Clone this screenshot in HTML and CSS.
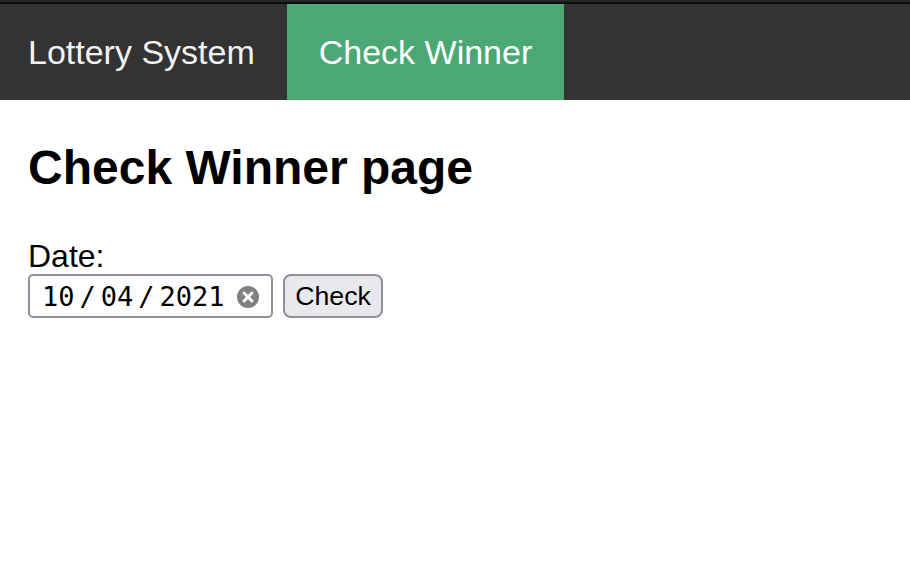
FILE: index.html
```html
<!DOCTYPE html>
<html lang="en">
<head>
<meta charset="utf-8">
<title>Check Winner</title>
<link rel="stylesheet" href="styles.css">
</head>
<body>
<div class="top-edge"></div>
<nav class="topnav">
  <a class="nav-item" href="#">Lottery System</a>
  <a class="nav-item active" href="#">Check Winner</a>
</nav>
<main class="content">
  <h2 class="title">Check Winner page</h2>
  <form class="check-form">
    <label class="date-label" for="date">Date:</label>
    <div class="form-row">
      <div class="date-field" id="date">
        <span class="seg">10</span>
        <span class="sep">/</span>
        <span class="seg">04</span>
        <span class="sep">/</span>
        <span class="seg">2021</span>
        <svg class="clear-icon" viewBox="0 0 22 22" width="22" height="22" aria-hidden="true">
          <circle cx="11" cy="11" r="11" fill="#808080"/>
          <path d="M7 7 L15 15 M15 7 L7 15" stroke="#fff" stroke-width="3" stroke-linecap="round"/>
        </svg>
      </div>
      <button class="check-btn" type="button">Check</button>
    </div>
  </form>
</main>
</body>
</html>
```
FILE: styles.css
```css
html, body {
  margin: 0;
  padding: 0;
  background: #ffffff;
}

body {
  font-family: "Liberation Sans", Arial, sans-serif;
  color: #000;
}

.top-edge {
  height: 2px;
  background: #0b0b0b;
  border-top: 2px solid #27262c;
}

.topnav {
  display: flex;
  background: #333333;
  height: 96px;
}

.nav-item {
  display: block;
  color: #f2f2f2;
  text-decoration: none;
  font-size: 34px;
  line-height: 96px;
  padding: 0 32px;
}

.nav-item:first-child {
  margin-left: -4px;
}

.nav-item.active {
  background: #4ba773;
  color: #ffffff;
}

.content {
  padding-left: 28px;
}

.title {
  font-size: 48px;
  font-weight: bold;
  line-height: 55px;
  margin: 40px 0 0;
}

.check-form {
  display: flex;
  flex-direction: column;
  align-items: flex-start;
  margin-top: 43px;
}

.date-label {
  font-size: 32px;
  line-height: 36px;
}

.form-row {
  display: flex;
  align-items: center;
  gap: 10px;
}

.date-field {
  box-sizing: border-box;
  width: 245px;
  height: 44px;
  border: 2px solid #8f8f9d;
  border-radius: 5px;
  display: flex;
  align-items: center;
  padding-left: 12px;
  font-family: "DejaVu Sans Mono", monospace;
  font-size: 27px;
  color: #000;
  flex-shrink: 0;
}

.seg,
.sep {
  line-height: 1;
}

.sep {
  margin: 0 5px;
}

.clear-icon {
  margin-left: 12px;
  margin-top: 2px;
}

.check-btn {
  box-sizing: border-box;
  height: 44px;
  width: 100px;
  flex-shrink: 0;
  border: 2px solid #8f8f9d;
  border-radius: 8px;
  background: #e9e9ed;
  font-family: "Liberation Sans", Arial, sans-serif;
  font-size: 26.7px;
  color: #000;
  padding: 0;
}
```
